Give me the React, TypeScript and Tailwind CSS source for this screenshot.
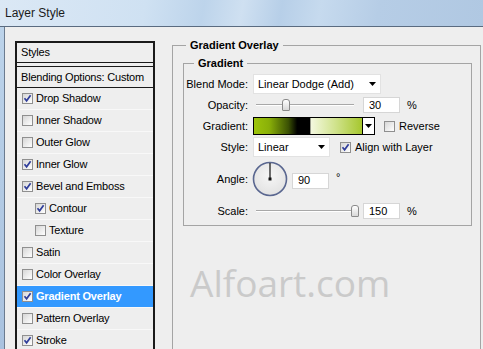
import React from "react";

type StyleRow = {
  label: string;
  checked?: boolean;
  indent?: boolean;
  selected?: boolean;
};

const styleRows: StyleRow[] = [
  { label: "Drop Shadow", checked: true },
  { label: "Inner Shadow" },
  { label: "Outer Glow" },
  { label: "Inner Glow", checked: true },
  { label: "Bevel and Emboss", checked: true },
  { label: "Contour", checked: true, indent: true },
  { label: "Texture", indent: true },
  { label: "Satin" },
  { label: "Color Overlay" },
  { label: "Gradient Overlay", checked: true, selected: true },
  { label: "Pattern Overlay" },
  { label: "Stroke", checked: true },
];

export default function App() {
  return (
    <div className="relative h-[349px] w-[483px] overflow-hidden bg-[#b9d0e8] font-['Liberation_Sans',Arial,sans-serif] text-[11px] text-black">
      {/* title bar */}
      <div className="flex h-[27px] items-center border-b border-[#5a6b80] bg-[linear-gradient(100deg,#dbe8f5_0%,#cfe1f2_30%,#bdd4eb_42%,#cfe0f1_50%,#b7cfe8_58%,#c6daee_66%,#b6cde6_78%,#b0c8e2_100%)] pl-[5px] text-[12px] text-[#1b1b1b]">
        Layer Style
      </div>

      <div className="flex h-[322px]">
        <div className="w-[4px] bg-[linear-gradient(180deg,#bcd3ea,#a9c2df)]" />
        <div className="flex flex-1 items-start border-l border-[#6b7b8f] bg-[#eeeeee] pl-[10px]">
          <StylesPanel />
          <div className="ml-[17px] mt-[11px] flex-1 pr-[2px]">
            <fieldset className="min-w-0 border border-[#a4a4a4] pb-[80px] pl-[10px] pr-[8px]">
              <legend className="ml-[3px] px-[4px] text-[11px] font-bold leading-[14px]">Gradient Overlay</legend>
              <fieldset className="mt-[4px] min-w-0 border border-[#a4a4a4] pb-[6px] pt-[4px]">
                <legend className="ml-[10px] px-[4px] text-[11px] font-bold leading-[14px]">Gradient</legend>
                <GradientForm />
              </fieldset>
              <div className="ml-[7px] mt-[38px] font-['Open_Sans',sans-serif] text-[37px] leading-none text-[#cacaca]">
                Alfoart.com
              </div>
            </fieldset>
          </div>
        </div>
      </div>
    </div>
  );
}

function StylesPanel() {
  return (
    <div className="mt-[14px] w-[140px] border-x-2 border-t-2 border-[#1a1a1a] bg-[#eeeeee] tracking-[-0.2px]">
      <div className="flex h-[20px] items-center border-b border-[#1a1a1a] pl-[4px]">Styles</div>
      <div className="mt-[3px] flex h-[22px] items-center border-y border-[#1a1a1a] pl-[4px]">
        Blending Options: Custom
      </div>
      {styleRows.map((row) => (
        <div
          key={row.label}
          className={
            row.selected
              ? "flex h-[22px] items-center gap-[3px] border-b border-[#f8f8f8] bg-[#3399ff] pl-[5px] font-bold text-white"
              : row.indent
                ? "flex h-[22px] items-center gap-[3px] border-b border-[#f8f8f8] pl-[18px]"
                : "flex h-[22px] items-center gap-[3px] border-b border-[#f8f8f8] pl-[5px]"
          }
        >
          <Checkbox checked={!!row.checked} />
          <span>{row.label}</span>
        </div>
      ))}
    </div>
  );
}

function GradientForm() {
  return (
    <div className="flex flex-col">
      <Row label="Blend Mode:" className="h-[20px]">
        <Select value="Linear Dodge (Add)" width="w-[128px]" />
      </Row>

      <Row label="Opacity:" className="mt-[3px] h-[16px]">
        <Slider thumb={26} />
        <NumberBox value="30" />
        <span className="ml-[7px]">%</span>
      </Row>

      <Row label="Gradient:" className="mt-[4px] h-[18px]">
        <div className="flex h-[18px] w-[122px] border border-black bg-white">
          <div className="h-full flex-1 bg-[linear-gradient(90deg,#9dc40a_0%,#8ab008_14%,#3a5004_32%,#000_40%,#000_52%,#f4f8e0_52.5%,#cfe28a_76%,#a6c72e_100%)]" />
          <div className="flex w-[12px] items-center justify-center border-l border-black">
            <Arrow />
          </div>
        </div>
        <Checkbox checked={false} className="ml-[9px]" />
        <span className="ml-[4px]">Reverse</span>
      </Row>

      <Row label="Style:" className="mt-[2px] h-[20px]">
        <Select value="Linear" width="w-[77px]" />
        <Checkbox checked className="ml-[10px]" />
        <span className="ml-[4px]">Align with Layer</span>
      </Row>

      <Row label="Angle:" className="mt-[4px] h-[36px]">
        <AngleDial />
        <div className="ml-[4px] mt-[3px]">
          <NumberBox value="90" className="ml-0" />
        </div>
        <span className="mb-[4px] ml-[7px] self-center leading-none">°</span>
      </Row>

      <Row label="Scale:" className="mt-[6px] h-[16px]">
        <Slider thumb={95} />
        <NumberBox value="150" />
        <span className="ml-[7px]">%</span>
      </Row>
    </div>
  );
}

function Row({ label, className, children }: { label: string; className: string; children: React.ReactNode }) {
  return (
    <div className={`flex items-center ${className}`}>
      <span className="w-[65px] shrink-0 pr-[1px] text-right">{label}</span>
      <div className="ml-[4px] flex h-full items-center">{children}</div>
    </div>
  );
}

function Select({ value, width }: { value: string; width: string }) {
  return (
    <div className={`flex h-[20px] ${width} items-center justify-between border border-[#e2e2e2] bg-white pl-[4px] pr-[4px]`}>
      <span>{value}</span>
      <Arrow />
    </div>
  );
}

function Arrow() {
  return (
    <svg width="7" height="4" viewBox="0 0 7 4">
      <path d="M0 0H7L3.5 4Z" fill="#000" />
    </svg>
  );
}

function Slider({ thumb }: { thumb: number }) {
  return (
    <div className="relative ml-[3px] h-[16px] w-[98px]">
      <div className="absolute left-0 right-0 top-[7px] h-[2px] border-t border-[#a8a8a8] bg-white" />
      <div
        className="absolute top-[2px] h-[12px] w-[8px] rounded-t-[3px] rounded-b-[1px] border border-[#8a8a8a] bg-[linear-gradient(180deg,#ffffff,#d8d8d8)]"
        style={{ left: thumb }}
      />
    </div>
  );
}

function NumberBox({ value, className = "ml-[9px]" }: { value: string; className?: string }) {
  return (
    <div className={`flex h-[16px] w-[37px] items-center border border-[#d6d6d6] bg-white pl-[5px] ${className}`}>
      {value}
    </div>
  );
}

function AngleDial() {
  return (
    <svg width="36" height="36" viewBox="0 0 36 36" className="-ml-[1px]">
      <defs>
        <radialGradient id="dialFill" cx="50%" cy="40%" r="60%">
          <stop offset="0%" stopColor="#f6f6f6" />
          <stop offset="100%" stopColor="#e2e2e2" />
        </radialGradient>
      </defs>
      <circle cx="18" cy="18" r="16.5" fill="url(#dialFill)" stroke="#5a6790" strokeWidth="1.6" />
      <line x1="18" y1="18" x2="18" y2="2" stroke="#111" strokeWidth="1.2" />
      <rect x="16.5" y="16.5" width="3" height="3" fill="#111" />
    </svg>
  );
}

function Checkbox({ checked, className = "" }: { checked: boolean; className?: string }) {
  return (
    <span
      className={`flex h-[11px] w-[11px] shrink-0 items-center justify-center border border-[#8f8f8f] bg-[linear-gradient(135deg,#d6d6d6,#ffffff)] ${className}`}
    >
      {checked && (
        <svg width="9" height="9" viewBox="0 0 9 9">
          <path d="M1.5 4.2L3.6 6.8L7.6 1.2" fill="none" stroke="#2f3d9a" strokeWidth="1.7" />
        </svg>
      )}
    </span>
  );
}
